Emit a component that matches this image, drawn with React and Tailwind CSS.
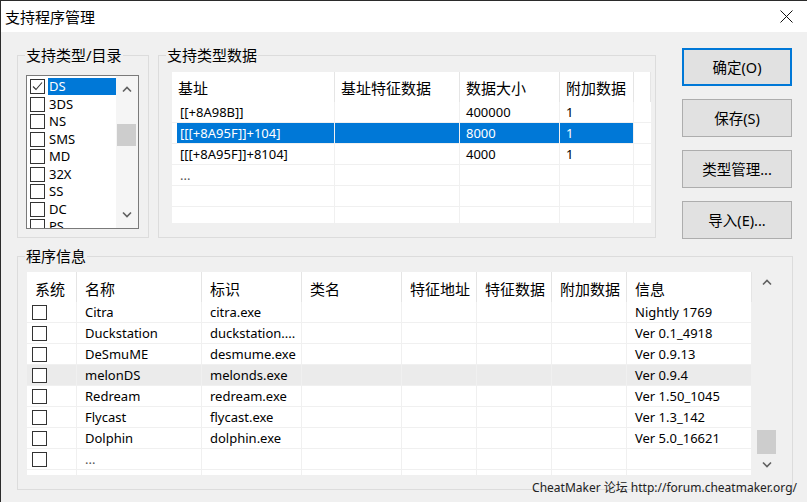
import React from "react";

const Chev = ({ down }) => (
  <svg width="10" height="7" viewBox="0 0 10 7" className="block">
    <polyline
      points={down ? "1,1.5 5,5.5 9,1.5" : "1,5.5 5,1.5 9,5.5"}
      fill="none"
      stroke="#606060"
      strokeWidth="1.6"
    />
  </svg>
);

const Check = ({ checked }) => (
  <div className="w-[15px] h-[15px] border border-[#333333] bg-white shrink-0 flex items-center justify-center">
    {checked && (
      <svg width="13" height="13" viewBox="0 0 13 13" className="block">
        <polyline points="2,6.5 5,9.5 11,2.5" fill="none" stroke="#333333" strokeWidth="1.1" />
      </svg>
    )}
  </div>
);

const typeItems = ["DS", "3DS", "NS", "SMS", "MD", "32X", "SS", "DC", "PS"];

const topHead = [
  ["基址", "w-[163px]"],
  ["基址特征数据", "w-[125px]"],
  ["数据大小", "w-[100px]"],
  ["附加数据", "w-[74px]"],
  ["", "w-[17px]"],
];
const topBodyW = ["w-[158px]", "w-[125px]", "w-[100px]", "w-[74px]"];
const topRows = [
  { c: ["[[+8A98B]]", "", "400000", "1"] },
  { c: ["[[[+8A95F]]+104]", "", "8000", "1"], sel: true },
  { c: ["[[[+8A95F]]+8104]", "", "4000", "1"] },
  { c: ["...", "", "", ""], dim: true },
  { c: ["", "", "", ""] },
  { c: ["", "", "", ""] },
];

const botHead = [
  ["系统", "w-[50px]"],
  ["名称", "w-[125px]"],
  ["标识", "w-[100px]"],
  ["类名", "w-[100px]"],
  ["特征地址", "w-[75px]"],
  ["特征数据", "w-[75px]"],
  ["附加数据", "w-[75px]"],
  ["信息", "w-[125px]"],
];
const botW = ["w-[50px]", "w-[125px]", "w-[100px]", "w-[100px]", "w-[75px]", "w-[75px]", "w-[75px]", "w-[125px]"];
const botRows = [
  ["Citra", "citra.exe", "Nightly 1769"],
  ["Duckstation", "duckstation....", "Ver 0.1_4918"],
  ["DeSmuME", "desmume.exe", "Ver 0.9.13"],
  ["melonDS", "melonds.exe", "Ver 0.9.4", true],
  ["Redream", "redream.exe", "Ver 1.50_1045"],
  ["Flycast", "flycast.exe", "Ver 1.3_142"],
  ["Dolphin", "dolphin.exe", "Ver 5.0_16621"],
  ["...", "", "", false, true],
];

const Btn = ({ children, def }) => (
  <div
    className={
      def
        ? "h-[38px] w-[110px] bg-[#e1e1e1] border-2 border-[#0078d7] flex items-center justify-center text-[14.5px] leading-[18px]"
        : "h-[38px] w-[110px] bg-[#e1e1e1] border border-[#adadad] flex items-center justify-center text-[14.5px] leading-[18px]"
    }
  >
    {children}
  </div>
);

export default function App() {
  return (
    <div className="w-[807px] h-[502px] relative overflow-hidden bg-[#f0f0f0] border-t border-l border-[#2b2b2b] flex flex-col text-black font-['Noto_Sans','Noto_Sans_CJK_SC',sans-serif]">
      {/* title bar */}
      <div className="h-[31px] shrink-0 bg-white flex items-center justify-between pl-[4px] pr-[14px]">
        <span className="text-[15px] leading-[18px]">支持程序管理</span>
        <svg width="13" height="13" viewBox="0 0 13 13" className="block">
          <line x1="0.5" y1="0.5" x2="12.5" y2="12.5" stroke="#111" strokeWidth="1" />
          <line x1="12.5" y1="0.5" x2="0.5" y2="12.5" stroke="#111" strokeWidth="1" />
        </svg>
      </div>

      {/* body */}
      <div className="flex flex-col pl-[16px] pt-[16px]">
        <div className="flex items-start">
          {/* left group */}
          <fieldset className="w-[132px] border border-[#dcdcdc] m-0 p-0">
            <legend className="ml-[7px] px-[1px] text-[15px] leading-[15px]">支持类型/目录</legend>
            <div className="pl-[8px] pt-[12px] pb-[8px]">
              <div className="w-[113px] h-[154px] border border-[#7a7a7a] bg-white flex overflow-hidden">
                <div className="w-[89px] pt-[2px] flex flex-col">
                  {typeItems.map((t, i) => (
                    <div key={t} className="h-[17.5px] shrink-0 flex items-center">
                      <div className="ml-[3px]">
                        <Check checked={i === 0} />
                      </div>
                      <div
                        className={
                          i === 0
                            ? "ml-[3px] flex-1 h-[17px] flex items-center pl-[1px] bg-[#0078d7] text-white text-[13px] leading-[17px]"
                            : "ml-[3px] flex-1 h-[17px] flex items-center pl-[1px] text-[13px] leading-[17px]"
                        }
                      >
                        {t}
                      </div>
                    </div>
                  ))}
                </div>
                <div className="w-[22px] bg-[#f5f5f5] flex flex-col">
                  <div className="h-[27px] flex items-center justify-center">
                    <Chev />
                  </div>
                  <div className="flex-1 pt-[21px]">
                    <div className="ml-[1px] w-[19px] h-[22px] bg-[#cdcdcd]" />
                  </div>
                  <div className="h-[27px] flex items-center justify-center">
                    <Chev down />
                  </div>
                </div>
              </div>
            </div>
          </fieldset>

          {/* middle group */}
          <fieldset className="ml-[9px] w-[498px] border border-[#dcdcdc] m-0 p-0">
            <legend className="ml-[7px] px-[1px] text-[15px] leading-[15px]">支持类型数据</legend>
            <div className="pl-[13px] pr-[4px] pt-[9px] pb-[14px]">
              <div className="w-[479px] h-[151px] bg-white overflow-hidden flex flex-col">
                <div className="h-[30px] shrink-0 flex">
                  {topHead.map(([h, w], i) => (
                    <div
                      key={i}
                      className={`${w} h-full pl-[6px] pt-[2px] flex items-center text-[15px] leading-[18px] border-r border-[#e5e5e5] whitespace-nowrap`}
                    >
                      {h}
                    </div>
                  ))}
                </div>
                {topRows.map((r, ri) => (
                  <div key={ri} className="h-[21px] shrink-0 flex border-b border-[#f0f0f0]">
                    <div className="w-[5px]" />
                    {r.c.map((v, ci) => (
                      <div
                        key={ci}
                        className={`${topBodyW[ci]} h-full flex items-center whitespace-nowrap text-[13px] leading-[17px] border-r border-[#f0f0f0] ${
                          ci === 0 ? "pl-[3px]" : "pl-[6px]"
                        } ${r.sel ? "bg-[#0078d7] text-white" : ""} ${r.dim ? "text-[#555555]" : ""}`}
                      >
                        {v}
                      </div>
                    ))}
                    <div className="w-[17px]" />
                  </div>
                ))}
              </div>
            </div>
          </fieldset>

          {/* buttons */}
          <div className="ml-[26px] flex flex-col gap-[13px]">
            <Btn def>确定(O)</Btn>
            <Btn>保存(S)</Btn>
            <Btn>类型管理...</Btn>
            <Btn>导入(E)...</Btn>
          </div>
        </div>

        {/* bottom group */}
        <fieldset className="mt-[10px] w-[776px] border border-[#dcdcdc] m-0 p-0">
          <legend className="ml-[7px] px-[1px] text-[15px] leading-[15px]">程序信息</legend>
          <div className="pl-[9px] pr-[15px] pt-[8px] pb-[14px]">
            <div className="w-[750px] h-[203px] flex">
              <div className="w-[725px] h-full bg-white overflow-hidden flex flex-col">
                <div className="h-[30px] shrink-0 flex">
                  {botHead.map(([h, w], i) => (
                    <div
                      key={i}
                      className={`${w} h-full pl-[8px] pt-[3px] flex items-center text-[15px] leading-[18px] border-r border-[#e5e5e5] whitespace-nowrap`}
                    >
                      {h}
                    </div>
                  ))}
                </div>
                {botRows.map(([n, id, info, hot, dim], ri) => (
                  <div
                    key={ri}
                    className={`h-[21px] shrink-0 flex border-b border-[#f0f0f0] ${hot ? "bg-[#ebebeb]" : ""}`}
                  >
                    {[null, n, id, "", "", "", "", info].map((v, ci) => (
                      <div
                        key={ci}
                        className={`${botW[ci]} h-full flex items-center whitespace-nowrap overflow-hidden text-[13px] leading-[17px] border-r border-[#f0f0f0] ${
                          ci === 0 ? "pl-[5px]" : "pl-[8px]"
                        } ${dim && ci === 1 ? "text-[#555555]" : ""}`}
                      >
                        {ci === 0 ? <Check /> : v}
                      </div>
                    ))}
                  </div>
                ))}
                <div className="h-[5px] shrink-0 flex">
                  {botW.map((w, i) => (
                    <div key={i} className={`${w} h-full border-r border-[#f0f0f0]`} />
                  ))}
                </div>
              </div>
              <div className="w-[25px] h-full flex flex-col">
                <div className="h-[21px] flex items-center justify-center pl-[4px]">
                  <Chev />
                </div>
                <div className="flex-1 flex flex-col justify-end">
                  <div className="ml-[5px] w-[19px] h-[24px] bg-[#cdcdcd]" />
                </div>
                <div className="h-[21px] flex items-center justify-center pl-[4px]">
                  <Chev down />
                </div>
              </div>
            </div>
          </div>
        </fieldset>
      </div>

      {/* watermark */}
      <div className="absolute right-[10px] bottom-[6px] text-[12px] leading-[16px] text-[#222222] whitespace-nowrap">
        CheatMaker 论坛 http://forum.cheatmaker.org/
      </div>
    </div>
  );
}
